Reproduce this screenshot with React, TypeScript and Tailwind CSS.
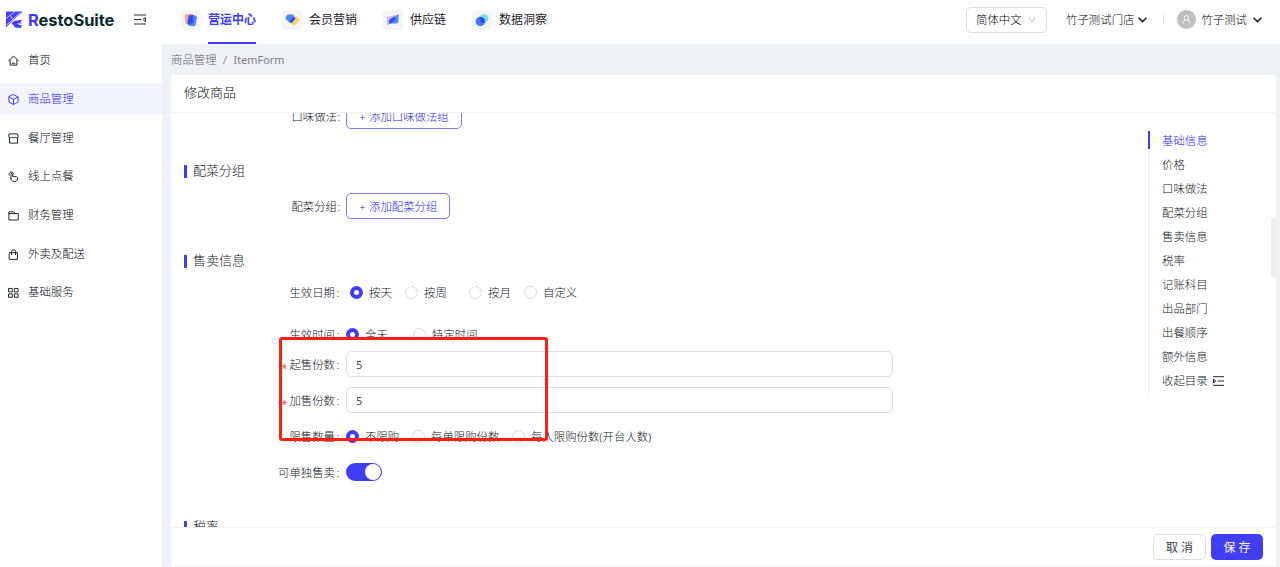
import type { ReactNode } from 'react';
import { AiOutlineUser, AiOutlineDown } from 'react-icons/ai';

function Logo() {
  return (
    <svg width="17" height="17" viewBox="0 0 17 17" className="shrink-0">
      <path d="M0 0.500H16.800L8 8.500L4 12.500L0 16.500Z" fill="#4540f5" />
      <path d="M8.500 9.800L12.500 9.200L16.500 8.800L14 11.300L16.800 12.500L15 16.800H9.500L5.500 12.200Z" fill="#4540f5" />
      <path d="M0 7.500L9 0.500M0.500 14L14.500 1.500M4.500 4.500L6.500 8.500" stroke="#fff" strokeWidth="0.700" fill="none" />
      <path d="M11 12.600L17 12.300V14.600L13.500 13.900Z" fill="#fff" />
    </svg>
  );
}

function LineIcon({ children }: { children: ReactNode }) {
  return (
    <svg width="11" height="11" viewBox="0 0 12 12" fill="none" stroke="currentColor" strokeWidth="0.950" strokeLinejoin="round" strokeLinecap="round">
      {children}
    </svg>
  );
}

const navItems: { label: string; art: ReactNode }[] = [
  {
    label: '营运中心',
    art: (
      <>
        <rect x="4" y="4" width="8.500" height="10" rx="2" fill="#ff9c94" transform="rotate(-6 8 9)" />
        <rect x="7" y="5" width="8.500" height="11" rx="2.500" fill="#5a83fa" transform="rotate(10 11 10)" />
        <path d="M8 5.500L12.400 5L12.600 12.500L9 14.500Q6.500 14 6.700 12Z" fill="#2552e8" />
      </>
    ),
  },
  {
    label: '会员营销',
    art: (
      <>
        <path d="M11 7H15L17 10L12 15.500L8 11Z" fill="#ffd35c" stroke="#ffd35c" strokeLinejoin="round" />
        <path d="M5.500 5H11L13 8.500L8.500 13L3.800 8.500Z" fill="#5a83fa" stroke="#5a83fa" strokeLinejoin="round" />
        <path d="M11 7L13.300 8.500L9.500 13.300L7.800 11Z" fill="#2552e8" />
      </>
    ),
  },
  {
    label: '供应链',
    art: (
      <>
        <path d="M3.800 8Q4 6.500 5.500 6.500L12 5V10L4 16Z" fill="#d5b4f5" />
        <path d="M15.500 4V11Q15.500 13.500 13 13.500H6V11.500Q6 10 7.500 9Z" fill="#5a83fa" />
        <path d="M12 6.500V10L7.500 13.500H6V11.500Q6 10 7.500 9Z" fill="#2552e8" />
      </>
    ),
  },
  {
    label: '数据洞察',
    art: (
      <>
        <circle cx="12" cy="8.500" r="4.500" fill="#79e3dc" />
        <circle cx="8.300" cy="11.500" r="4.700" fill="#4a74f8" />
        <path d="M7.500 8Q9 6.600 11 7.600Q13.500 9.500 12.800 12.900Q10.500 13.500 8.800 12Q7.300 10.500 7.500 8Z" fill="#2552e8" />
      </>
    ),
  },
];

const menu: { label: string; icon: ReactNode }[] = [
  { label: '首页', icon: <path d="M0.800 6.300L6 1L11.200 6.300M2.300 5.500V11H9.700V5.500M4.500 9H7.500" /> },
  { label: '商品管理', icon: <path d="M6 0.700L11 3.200V8.800L6 11.400L1 8.800V3.200ZM1.200 3.400L6 5.900L10.800 3.400M6 5.900V11.200" /> },
  { label: '餐厅管理', icon: <path d="M1.700 1H10.300L11.200 3.800Q11 5.300 9.600 5.300Q8.200 5.300 7.700 4.300Q7 5.300 6 5.300Q5 5.300 4.300 4.300Q3.800 5.300 2.400 5.300Q1 5.300 0.800 3.800ZM1.600 5.500V11H10.400V5.500" /> },
  { label: '线上点餐', icon: <path d="M1.300 4.600A2.600 2.600 0 1 1 6.300 3.500M3.300 8V3.500a.8.8 0 0 1 1.600 0V5.700L9 6.200c1 .2 1.500.8 1.400 1.700L10 9.700c-.3 1.200-1 1.800-2.100 1.800H6.300c-1 0-1.700-.5-2.200-1.400L2.500 7.700" /> },
  { label: '财务管理', icon: <path d="M1 10.500V2H6.500L8 4H11.200V10.500ZM1 4H8" /> },
  { label: '外卖及配送', icon: <path d="M1.700 4H10.300V11.300H1.700ZM3.900 6.200V3A2.100 2.100 0 0 1 8.100 3V6.200" /> },
  { label: '基础服务', icon: <path d="M1 1.600H4.700V5.300H1ZM7.300 1.600H11V5.300H7.300ZM1 7.500H4.700V11.200H1ZM7.300 7.500H11V11.200H7.300Z" /> },
];

const anchors = ['基础信息', '价格', '口味做法', '配菜分组', '售卖信息', '税率', '记账科目', '出品部门', '出餐顺序', '额外信息'];

function Chevron() {
  return (
    <svg width="9" height="6" viewBox="0 0 9 6" fill="none" stroke="#1f1f1f" strokeWidth="1.500">
      <path d="M0.600 0.700L4.500 4.600L8.400 0.700" />
    </svg>
  );
}

function SectionTitle({ children }: { children: ReactNode }) {
  return (
    <div className="flex h-5 shrink-0 items-center pl-[13px] text-[13px] text-[#14171d]">
      <span className="mr-[6px] h-[13px] w-[3px] bg-[#403df5]" />
      <span className="pb-[2px]">{children}</span>
    </div>
  );
}

function Row({ label, required, tight, className = '', children }: { label: string; required?: boolean; tight?: boolean; className?: string; children: ReactNode }) {
  return (
    <div className={`flex h-[26px] shrink-0 items-center ${className}`}>
      <div className="mr-[5px] flex w-[170px] shrink-0 items-center justify-end pt-[2px] text-[#14171d]">
        {required && <span className="mr-[2px] pt-[4px] text-[11px] font-normal leading-none text-[#ff4d4f]">*</span>}
        <span>{label}</span>
        <span className={tight ? 'w-[4px] text-center' : 'w-[6px] text-center'}>:</span>
      </div>
      {children}
    </div>
  );
}

function Radio({ label, checked, className = '' }: { label: string; checked?: boolean; className?: string }) {
  return (
    <div className={`flex items-center whitespace-nowrap text-[#14171d] ${className}`}>
      <span className={checked ? 'mr-[6px] size-[13px] rounded-full border-[4px] border-[#403df5] bg-white' : 'mr-[6px] size-[13px] rounded-full border border-[#dcdcdc] bg-white'} />
      <span className="pt-[2px]">{label}</span>
    </div>
  );
}

function AddButton({ children }: { children: ReactNode }) {
  return (
    <button className="flex h-[26px] items-center rounded-[5px] border border-[#7d7bf8] px-[12px] pt-[2px] text-[#2b27ee]">
      <span className="mr-[3px] w-[7px] text-[11px]">+</span>
      {children}
    </button>
  );
}

function NumberInput() {
  return (
    <div className="flex h-[26px] w-[547px] items-center rounded-[5px] border border-[#dedede] px-[9px] pt-[2px] text-[11px] font-normal text-[#4a4d52]">5</div>
  );
}

export default function App() {
  return (
    <div className="relative flex h-[567px] w-[1280px] flex-col overflow-hidden bg-white font-['Noto_Sans','Noto_Sans_CJK_SC',sans-serif] text-[11.400px] font-light leading-[18px]">
      <header className="flex h-[44px] shrink-0 items-center pb-[5px] pl-[6px] pr-[18px]">
        <Logo />
        <div className="ml-[5px] w-[86px] font-['Inter',sans-serif] text-[16.500px] font-bold tracking-[-0.060px] text-[#0b2a2d]">
          <span className="text-[#403df5]">R</span>estoSuite
        </div>
        <svg width="12" height="11" viewBox="0 0 12 11" className="ml-[20px]" fill="none" stroke="#333" strokeWidth="1">
          <path d="M0 1H12M0 5.500H7.500M0 10H12M11.500 3.500V7.500L9 5.500Z" />
        </svg>
        <nav className="ml-[35px] flex items-center gap-[26px] text-[12px] font-normal text-[#1f2329]">
          {navItems.map((item, i) => (
            <div key={item.label} className="flex items-center gap-[7px]">
              <svg width="20" height="20" viewBox="0 0 20 20" className="rounded-[4px] bg-[#f5f5f5]">{item.art}</svg>
              <div className={i === 0 ? 'relative pt-px font-bold text-[#403df5]' : 'pt-px'}>
                {item.label}
                {i === 0 && <span className="absolute inset-x-0 -bottom-[15px] h-[2px] bg-[#403df5]" />}
              </div>
            </div>
          ))}
        </nav>
        <div className="ml-auto flex items-center text-[#050505]">
          <div className="flex h-[26px] w-[81px] items-center justify-between rounded-[5px] border border-[#dedede] px-[9px]">
            简体中文
            <AiOutlineDown className="size-[10px] text-[#aaa]" />
          </div>
          <span className="ml-[19px] mr-[4px]">竹子测试门店</span>
          <Chevron />
          <span className="ml-[16px] h-[9px] w-px bg-[#e5e5e5]" />
          <span className="ml-[13px] mr-[5px] flex size-[19px] items-center justify-center rounded-full bg-[#bfbfbf] text-white">
            <AiOutlineUser className="size-[11px]" />
          </span>
          <span className="mr-[6px]">竹子测试</span>
          <Chevron />
        </div>
      </header>

      <div className="flex min-h-0 flex-1">
        <aside className="flex w-[162px] shrink-0 flex-col gap-[6px] text-[#050a10]">
          {menu.map((item, i) => (
            <div key={item.label} className={i === 1 ? 'flex h-[32.700px] items-center gap-[9px] bg-[#f3f3fe] pl-[7px] text-[#2b27ee]' : 'flex h-[32.700px] items-center gap-[9px] pl-[7px]'}>
              <span className="flex size-[12px] items-center justify-center pt-[1px]"><LineIcon>{item.icon}</LineIcon></span>
              <span>{item.label}</span>
            </div>
          ))}
        </aside>

        <main className="flex min-w-0 flex-1 flex-col bg-[#f0f1f5] pb-[1px] pl-[9px] pr-[4px]">
          <div className="flex h-[31px] shrink-0 items-center gap-[6.500px] pt-[1px] text-[#5f6268]">
            <span>商品管理</span>
            <span>/</span>
            <span className="text-[10.900px] font-normal text-[#7c7f85]">ItemForm</span>
          </div>
          <div className="flex min-h-0 flex-1 flex-col rounded-[2px] bg-white">
            <h1 className="flex h-[38px] shrink-0 items-center border-b border-[#f2f2f2] pb-[3px] pl-[13px] text-[13px] text-[#0a0d12]">修改商品</h1>
            <div className="flex min-h-0 flex-1 overflow-hidden">
              <div className="flex min-w-0 flex-1 flex-col">
                <Row label="口味做法" tight className="-mt-[10px]"><AddButton>添加口味做法组</AddButton></Row>
                <div className="h-8 shrink-0" />
                <SectionTitle>配菜分组</SectionTitle>
                <Row label="配菜分组" tight className="mt-[12px]"><AddButton>添加配菜分组</AddButton></Row>
                <div className="h-8 shrink-0" />
                <SectionTitle>售卖信息</SectionTitle>
                <Row label="生效日期" className="mt-[8px]">
                  <Radio label="按天" checked className="ml-[4px] w-[55px]" />
                  <Radio label="按周" className="w-[64px]" />
                  <Radio label="按月" className="w-[55px]" />
                  <Radio label="自定义" />
                </Row>
                <div className="mt-[16px] h-[19px] shrink-0 overflow-hidden">
                  <Row label="生效时间">
                    <Radio label="全天" checked className="w-[67px]" />
                    <Radio label="特定时间" />
                  </Row>
                </div>
                <Row label="起售份数" required className="mt-[11px]"><NumberInput /></Row>
                <Row label="加售份数" required className="mt-[10px]"><NumberInput /></Row>
                <Row label="限售数量" className="mt-[10px]">
                  <Radio label="不限购" checked className="w-[66px]" />
                  <Radio label="每单限购份数" className="w-[100px]" />
                  <Radio label="每人限购份数(开台人数)" />
                </Row>
                <Row label="可单独售卖" className="mt-[10px]">
                  <span className="flex h-[18px] w-[36px] items-center justify-end rounded-full bg-[#403df5] pr-[1px]">
                    <span className="size-[16px] rounded-full bg-white" />
                  </span>
                </Row>
                <div className="h-[32px] shrink-0" />
                <SectionTitle>税率</SectionTitle>
              </div>
              <div className="flex w-[128px] shrink-0 items-start justify-between pt-[15px]">
                <div className="h-[266px] border-l-[1.500px] border-[#ededf0] text-[#14171d]">
                  {anchors.map((a, i) => (
                    <div key={a} className="-ml-px flex h-[24.100px] items-center">
                      <span className={i === 0 ? 'mr-[12px] h-[18px] w-[2px] bg-[#403df5]' : 'mr-[12px] w-[2px]'} />
                      <span className={i === 0 ? 'pt-px text-[#2b27ee]' : 'pt-px'}>{a}</span>
                    </div>
                  ))}
                  <div className="flex h-[24.100px] items-center gap-[5px] pl-[13px]">
                    <span className="pt-px">收起目录</span>
                    <svg width="11" height="10" viewBox="0 0 11 10" fill="none" stroke="#222" strokeWidth="1">
                      <path d="M0 0.700H11M4.500 5H11M0 9.300H11M0.500 3.200V6.800L2.800 5Z" />
                    </svg>
                  </div>
                </div>
                <span className="mt-[89px] h-[61px] w-[5px] rounded-[2px] bg-[#f0f0f1]" />
              </div>
            </div>
            <footer className="flex h-[39px] shrink-0 items-center justify-end gap-[5px] border-t border-[#f2f2f2] pr-[13px] text-[12px] font-normal">
              <button className="h-[26px] w-[53px] rounded-[5px] border border-[#dedede] pt-px text-[#3c3f45]">取 消</button>
              <button className="h-[26px] w-[52px] rounded-[5px] bg-[#403df5] pt-px text-white">保 存</button>
            </footer>
          </div>
        </main>
      </div>
      <div className="pointer-events-none absolute left-[279px] top-[337px] h-[104px] w-[269px] rounded-[3px] border-[3px] border-[#ff1f12]" />
    </div>
  );
}
